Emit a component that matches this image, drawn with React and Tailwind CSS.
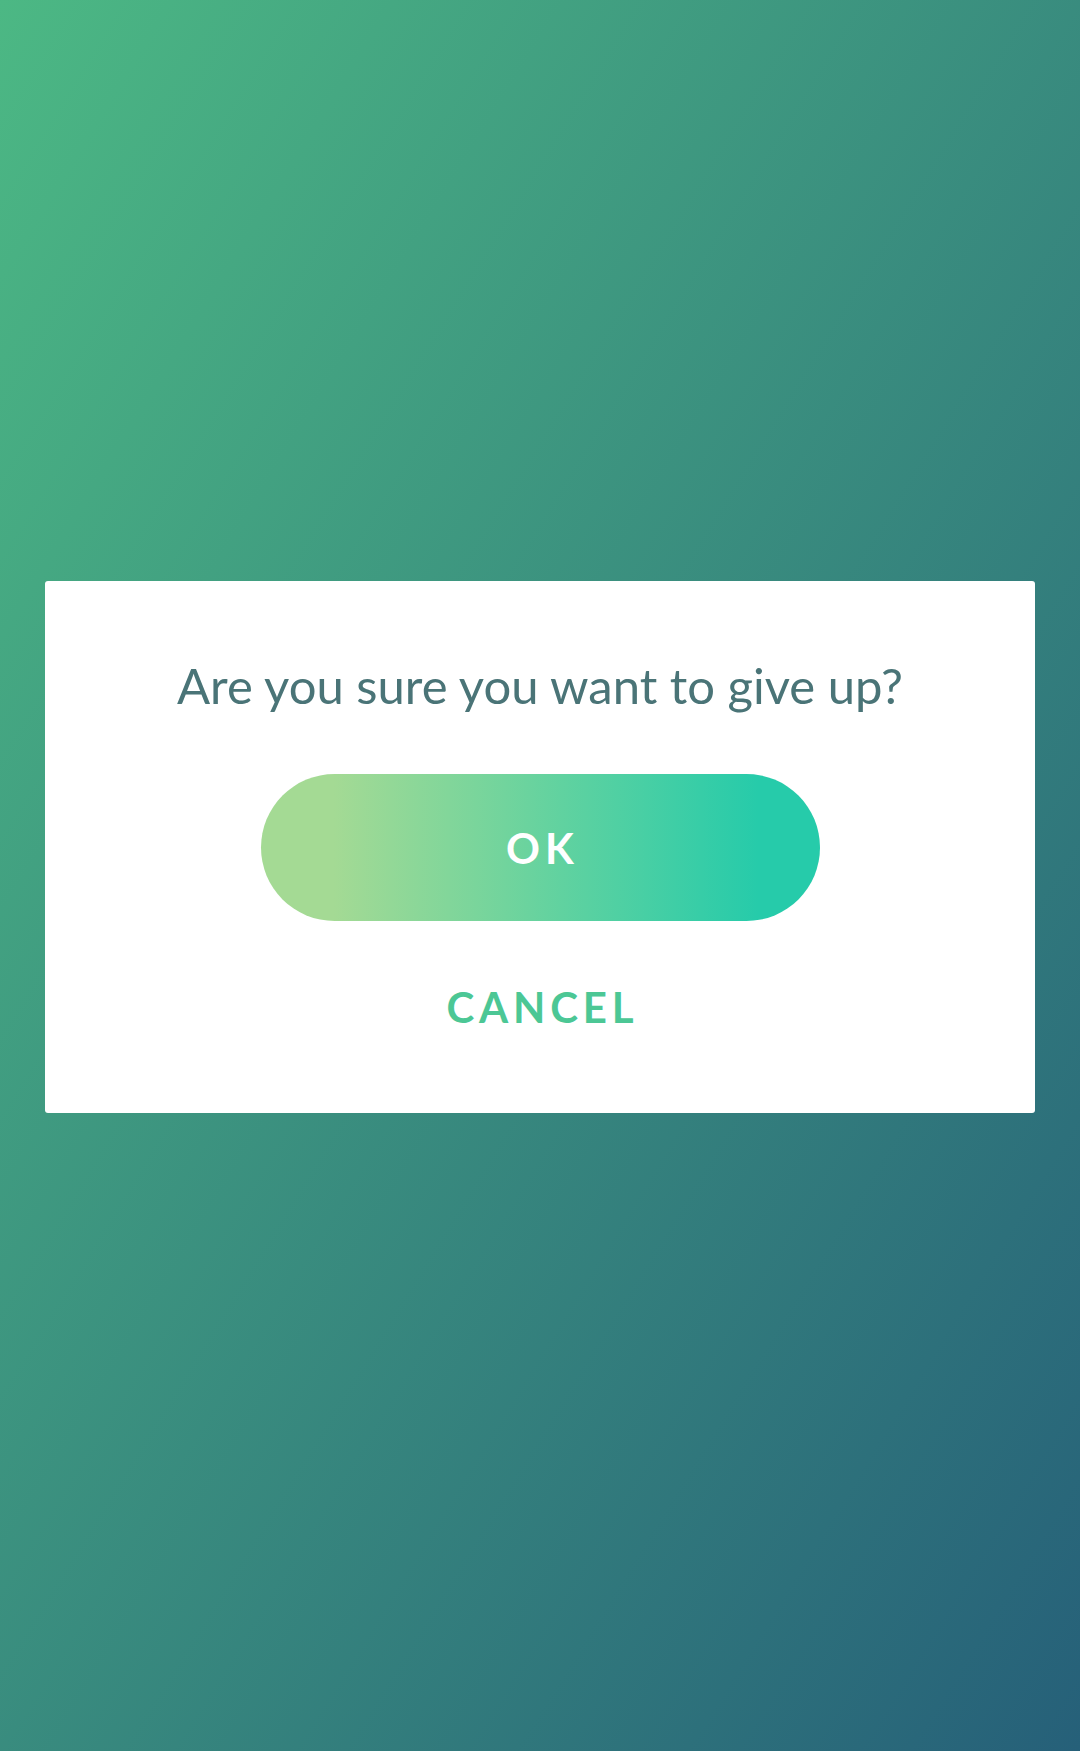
export default function App() {
  return (
    <div className="w-full h-[1751px] flex flex-col bg-[linear-gradient(to_bottom_right,#4cb884,#266079)] font-['Lato','Noto_Sans',sans-serif]">
      <div className="h-[581px] shrink-0" />
      <div className="mx-[45px] h-[532px] bg-white rounded-[3px] flex flex-col items-center pt-[81px]">
        <p className="text-[49px] leading-[46px] text-[#4a7477] whitespace-nowrap">
          Are you sure you want to give up?
        </p>
        <button className="mt-[66px] w-[559px] h-[147px] rounded-full bg-[linear-gradient(to_right,#a4da94_13%,#26cbaa_89%)] flex items-center justify-center">
          <span className="text-white font-bold text-[42px] leading-[42px] tracking-[0.12em] pl-[0.12em]">OK</span>
        </button>
        <button className="mt-[65px] text-[#4cc795] font-bold text-[42px] leading-[42px] tracking-[0.115em] pl-[0.115em]">
          CANCEL
        </button>
      </div>
    </div>
  );
}
